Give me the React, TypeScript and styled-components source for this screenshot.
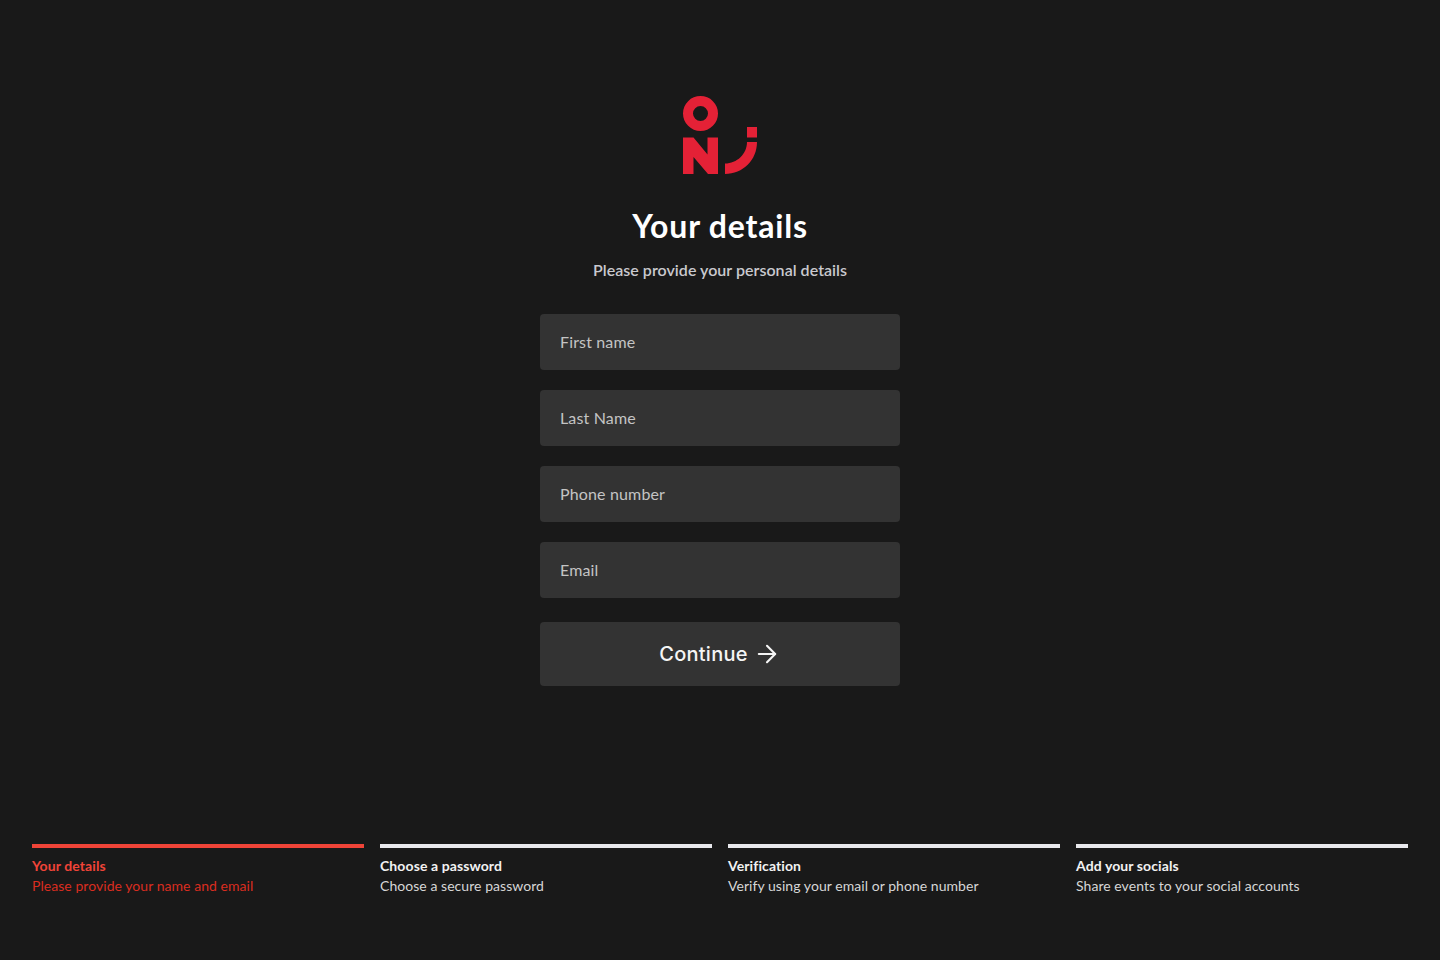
import * as React from 'react';
import styled, { createGlobalStyle } from 'styled-components';
import { ArrowRight } from 'lucide-react';

const GlobalStyle = createGlobalStyle`
  html, body {
    margin:     0;
    background: #191919;
    font-family: Lato, "Open Sans", sans-serif;
  }
  * { box-sizing: border-box; }
`;

const Page = styled.div`
  min-height:     960px;
  display:        flex;
  flex-direction: column;
  padding:        96px 32px 0;
`;

const Form = styled.form`
  width:          360px;
  margin:         0 auto;
  display:        flex;
  flex-direction: column;
  align-items:    center;
`;

const Logo = styled.svg`
  display: block;
  width:   75px;
  height:  78px;
`;

const Title = styled.h1`
  margin:         34px 0 0;
  font-size:      32px;
  line-height:    36px;
  font-weight:    700;
  letter-spacing: 0.8px;
  color:          #fff;
`;

const Subtitle = styled.p`
  margin:         14px 0 0;
  font-size:      16px;
  line-height:    24px;
  font-weight:    600;
  color:          #c9c9ce;
  letter-spacing: 0.03px;
`;

const Fields = styled.div`
  width:          100%;
  margin-top:     32px;
  display:        flex;
  flex-direction: column;
  gap:            20px;
`;

const Input = styled.input`
  width:          100%;
  height:         56px;
  padding:        0 20px 2px;
  border:         0;
  border-radius:  4px;
  background:     #333333;
  color:          #fff;
  font-family:    inherit;
  font-size:      16px;
  letter-spacing: 0.15px;
  outline:        none;

  &::placeholder {
    color:   #c4c4c4;
    opacity: 1;
  }
`;

const Button = styled.button`
  width:           100%;
  height:          64px;
  margin-top:      24px;
  border:          0;
  border-radius:   4px;
  background:      #333333;
  color:           #f5f5f5;
  font-family:     Inter, sans-serif;
  font-size:       20px;
  font-weight:     500;
  letter-spacing:  0.25px;
  display:         flex;
  align-items:     center;
  justify-content: center;
  gap:             5px;
`;

const Steps = styled.ol`
  list-style:            none;
  margin:                158px 0 0;
  padding:               0;
  display:               grid;
  grid-template-columns: repeat(4, 1fr);
  gap:                   16px;
`;

const Step = styled.li<{ $active?: boolean }>`
  border-top:  4px solid ${p => (p.$active ? '#f04438' : '#e8e8ec')};
  padding-top: 8px;
  color:       ${p => (p.$active ? '#f04438' : '#f2f2f2')};
`;

const StepTitle = styled.div`
  font-size:      14px;
  line-height:    20px;
  font-weight:    700;
  letter-spacing: 0.1px;
`;

const StepText = styled.div<{ $active?: boolean }>`
  font-size:      14px;
  line-height:    20px;
  font-weight:    400;
  letter-spacing: 0.05px;
  color:          ${p => (p.$active ? '#d92d20' : '#d6d6d6')};
`;

const steps = [
  { title: 'Your details', text: 'Please provide your name and email', active: true },
  { title: 'Choose a password', text: 'Choose a secure password' },
  { title: 'Verification', text: 'Verify using your email or phone number' },
  { title: 'Add your socials', text: 'Share events to your social accounts' }
];

const App = () => (
  <Page>
    <GlobalStyle />
    <Form>
      <Logo viewBox="0 0 75 78" fill="#e42136">
        <path fillRule="evenodd" d="M17.5 0a17.5 17.5 0 1 0 0 35a17.5 17.5 0 1 0 0-35zM17.5 10a7.5 7.5 0 1 1 0 15a7.5 7.5 0 1 1 0-15z" />
        <path d="M0 41.500h10.500l14 17V41.500h10.500V78h-10L10.500 61v17H0z" />
        <path d="M64 31h10v10.500H64z" />
        <path d="M64 46h10C74 64 60 78 42 78V67.500C54 67.500 64 58 64 46z" />
      </Logo>
      <Title>Your details</Title>
      <Subtitle>Please provide your personal details</Subtitle>
      <Fields>
        <Input placeholder="First name" />
        <Input placeholder="Last Name" />
        <Input placeholder="Phone number" />
        <Input placeholder="Email" />
      </Fields>
      <Button type="button">
        Continue
        <ArrowRight size={28} strokeWidth={1.8} />
      </Button>
    </Form>
    <Steps>
      {steps.map(s => (
        <Step key={s.title} $active={s.active}>
          <StepTitle>{s.title}</StepTitle>
          <StepText $active={s.active}>{s.text}</StepText>
        </Step>
      ))}
    </Steps>
  </Page>
);

export default App;
